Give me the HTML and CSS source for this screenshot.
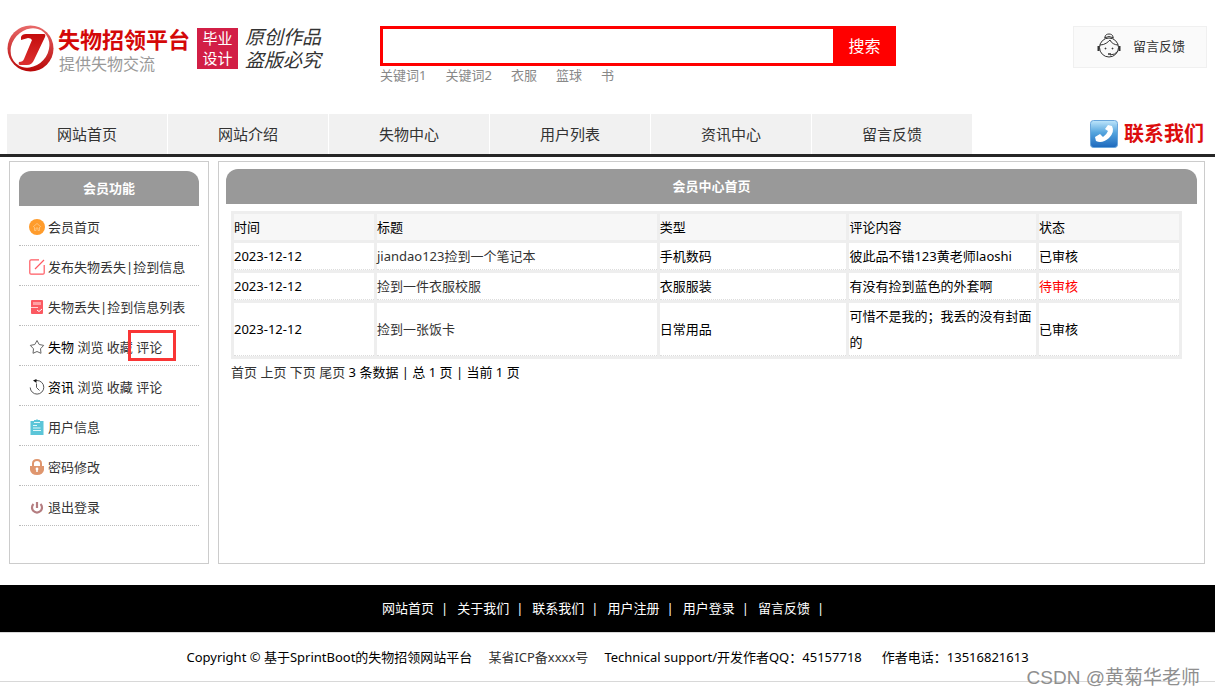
FILE: index.html
```html
<!DOCTYPE html>
<html lang="zh-CN">
<head>
<meta charset="utf-8">
<title>失物招领平台</title>
<link rel="stylesheet" href="styles.css">
</head>
<body>
<header class="header">
  <div class="brand">
    <svg class="brand-mark" viewBox="0 0 47 47" aria-hidden="true">
      <defs>
        <linearGradient id="ring" x1="0" y1="0" x2="0" y2="1"><stop offset="0" stop-color="#e86a6a"/><stop offset="1" stop-color="#b80606"/></linearGradient>
        <linearGradient id="stem" x1="0" y1="0" x2="0" y2="1"><stop offset="0" stop-color="#c40c0c"/><stop offset="1" stop-color="#dc3030"/></linearGradient>
      </defs>
      <circle cx="23.500" cy="23.500" r="23" fill="url(#ring)"/>
      <ellipse cx="23" cy="23" rx="21" ry="18" fill="#fff" transform="rotate(-48 23 23)"/>
      <path d="M14 12Q15 9 19 9H37Q39 9 38 12L27 35Q25 40 20 40H13Q11 40 12 37Q16 37 17 34L25 15Q24 13 21 13L14 15Z" fill="url(#stem)"/>
    </svg>
    <div class="brand-text">
      <h1 class="brand-name">失物招领平台</h1>
      <p class="brand-sub">提供失物交流</p>
    </div>
    <div class="badge">毕业<br>设计</div>
    <div class="slogan"><div>原创作品</div><div>盗版必究</div></div>
  </div>
  <div class="search">
    <form class="search-form">
      <input class="search-input" type="text" aria-label="搜索关键词">
      <button class="search-button" type="button">搜索</button>
    </form>
    <div class="keywords"><a href="#">关键词1</a><a href="#">关键词2</a><a href="#">衣服</a><a href="#">篮球</a><a href="#">书</a></div>
  </div>
  <a class="feedback" href="#">
    <svg class="feedback-icon" viewBox="0 0 24 26" fill="none" stroke="#333" aria-hidden="true">
      <path d="M8 4C8 0 16 0 16 4M7 5Q12 2 17 5"/>
      <circle cx="12" cy="14.500" r="9.500"/>
      <path d="M3 12C8 12 11 9 13 7C14 10 18 12 21 12"/>
      <path d="M1.500 13V18M22.500 13V18" stroke-width="2"/>
      <path d="M21 18Q18 22 13 22"/>
      <path d="M11 21H14" stroke-width="1.500"/>
      <circle cx="8.500" cy="15.500" r=".5" fill="#333"/><circle cx="15.500" cy="15.500" r=".5" fill="#333"/>
    </svg>
    留言反馈
  </a>
</header>

<div class="navbar">
  <nav class="nav"><a href="#">网站首页</a><a href="#">网站介绍</a><a href="#">失物中心</a><a href="#">用户列表</a><a href="#">资讯中心</a><a href="#">留言反馈</a></nav>
  <a class="contact" href="#">
    <svg class="contact-icon" viewBox="0 0 28 28" aria-hidden="true">
      <defs><linearGradient id="tile" x1="0" y1="0" x2="0" y2="1"><stop offset="0" stop-color="#bfe6fb"/><stop offset=".45" stop-color="#54a5de"/><stop offset="1" stop-color="#1c68bd"/></linearGradient></defs>
      <rect x=".5" y=".5" width="27" height="27" rx="3" fill="url(#tile)" stroke="#6aa7dc"/>
      <path d="M18 5L22 6Q25 12 19 18Q12 24 6 21L5 17L10 14L13 17Q17 14 18 11L15 9Z" fill="#fff"/>
    </svg>
    联系我们
  </a>
</div>

<main class="content">
  <aside class="panel side">
    <h2 class="panel-title">会员功能</h2>
    <ul class="menu">
      <li><svg viewBox="0 0 16 16"><circle cx="8" cy="8" r="8" fill="#ff9c2c"/><path d="M4 8L8 4.500L12 8M5.500 8V11.500H7V9H9V11.500H10.500V8" fill="none" stroke="#ffc988" stroke-width=".8"/></svg><a href="#">会员首页</a></li>
      <li><svg viewBox="0 0 16 16" fill="none" stroke="#ff5a62" stroke-width="1.200"><path d="M10 .8H2Q.8.800.8 2V14Q.8 15.200 2 15.200H14Q15.200 15.200 15.200 14V6M6 10L15 1"/></svg><a href="#">发布失物丢失|捡到信息</a></li>
      <li><svg viewBox="0 0 16 16"><rect x="2" y="1" width="12" height="14" rx="1" fill="#fb5961"/><path d="M4 3H12V6H4Z" fill="#ffa0a3"/><path d="M2 8.500H9" stroke="#ffd2d3"/><path d="M8 11L10 12.500L13 10" fill="none" stroke="#fff"/></svg><a href="#">失物丢失|捡到信息列表</a></li>
      <li><svg viewBox="0 0 16 16" fill="none" stroke="#666"><path d="M8 1.500L10.200 5.500L14.700 6.400L11.500 9.800L12 14.300L8 12.500L4 14.300L4.500 9.800L1.300 6.400L5.800 5.500Z" stroke-linejoin="round"/></svg><span>失物 <a href="#">浏览</a> <a href="#">收藏</a> <a class="marked" href="#">评论</a></span></li>
      <li><svg viewBox="0 0 16 16" fill="none" stroke="#555"><path d="M6 1.500H8A6.800 6.800 0 1 1 1.200 8.500M7.500 4.500V8.500L10.500 11.500"/><path d="M4 1.500L7.500 0V4Z" fill="#111" stroke="none"/></svg><span>资讯 <a href="#">浏览</a> <a href="#">收藏</a> <a href="#">评论</a></span></li>
      <li><svg viewBox="0 0 16 16"><path d="M1.500 2H5V1H7Q8-.500 9 1H11V2H14.500V16H1.500Z" fill="#5bc5d8"/><path d="M5 3.500H11M4 6.500H8M4 9H11.500M4 11.500H12" stroke="#e0f7fa"/></svg><a href="#">用户信息</a></li>
      <li><svg viewBox="0 0 16 16"><path d="M4 8V4.500Q4 1 8 1Q12 1 12 4.500V8" fill="none" stroke="#df966e" stroke-width="2"/><path d="M1 7H15V11Q14 16 8 16Q2 16 1 11Z" fill="#df966e"/><circle cx="8" cy="10" r="1.400" fill="#fff"/><path d="M8 10V13" stroke="#fff" stroke-width="1.500"/></svg><a href="#">密码修改</a></li>
      <li><svg viewBox="0 0 16 16" fill="none" stroke="#b47d80" stroke-width="2.200"><path d="M4.500 5A5 5 0 1 0 11.500 5M8 3V9"/></svg><a href="#">退出登录</a></li>
    </ul>
  </aside>
  <section class="panel main">
    <h2 class="panel-title">会员中心首页</h2>
    <div class="records">
      <table class="table">
        <colgroup><col class="c15"><col class="c30"><col class="c20"><col class="c20"><col class="c15"></colgroup>
        <thead><tr><th>时间</th><th>标题</th><th>类型</th><th>评论内容</th><th>状态</th></tr></thead>
        <tbody>
          <tr><td>2023-12-12</td><td><a href="#">jiandao123捡到一个笔记本</a></td><td>手机数码</td><td>彼此品不错123黄老师laoshi</td><td>已审核</td></tr>
          <tr><td>2023-12-12</td><td><a href="#">捡到一件衣服校服</a></td><td>衣服服装</td><td>有没有捡到蓝色的外套啊</td><td class="pending">待审核</td></tr>
          <tr><td>2023-12-12</td><td><a href="#">捡到一张饭卡</a></td><td>日常用品</td><td>可惜不是我的；我丢的没有封面的</td><td>已审核</td></tr>
        </tbody>
      </table>
      <div class="pager"><a href="#">首页</a> <a href="#">上页</a> <a href="#">下页</a> <a href="#">尾页</a> 3 条数据 | 总 1 页 | 当前 1 页</div>
    </div>
  </section>
</main>

<footer class="footer">
  <nav class="footer-nav"><a href="#">网站首页</a><a href="#">关于我们</a><a href="#">联系我们</a><a href="#">用户注册</a><a href="#">用户登录</a><a href="#">留言反馈</a></nav>
  <div class="copyright">
    <span>Copyright © 基于SprintBoot的失物招领网站平台</span>
    <a href="#">某省ICP备xxxx号</a>
    <span>Technical support/开发作者QQ：45157718</span>
    <span class="phone">作者电话：13516821613</span>
  </div>
  <div class="watermark">CSDN @黄菊华老师</div>
</footer>
</body>
</html>
```

FILE: styles.css
```css
*, *::after { box-sizing: border-box; }
body {
  margin: 0;
  background: #fff;
  color: #000;
  font: 13px/26px "Noto Sans", "Noto Sans CJK SC", sans-serif;
}
h1, h2, p, ul { margin: 0; padding: 0; }
a { color: #333; text-decoration: none; }

.header {
  display: grid;
  grid-template-columns: 373px 516px 1fr;
  align-items: start;
  padding: 25px 8px 0 7px;
  min-height: 114px;
}
.brand { display: flex; align-items: flex-start; }
.brand-mark { width: 47px; height: 47px; flex: none; }
.brand-text { margin-left: 4px; }
.brand-name { color: #d40808; font-size: 22px; line-height: 28px; font-weight: 700; }
.brand-sub { padding-left: 1px; color: #999; font-size: 16px; line-height: 22px; }
.badge {
  width: 41px;
  height: 41px;
  margin: 3px 0 0 7px;
  background: #d21f46;
  color: #fff;
  font-size: 15px;
  line-height: 20px;
  text-align: center;
}
.slogan {
  display: grid;
  gap: 4px;
  margin: 3px 0 0 7px;
  color: #333;
  font-size: 19px;
  font-style: italic;
  line-height: 19px;
}

.search { padding-top: 1px; }
.search-form { display: flex; height: 40px; }
.search-input {
  flex: 1;
  min-width: 0;
  padding: 0 8px;
  border: 3px solid #f00;
  border-right: 0;
  outline: 0;
  font: inherit;
}
.search-button {
  width: 63px;
  padding: 0;
  border: 0;
  background: #f00;
  color: #fff;
  font: inherit;
  font-size: 16px;
}
.keywords { display: flex; gap: 19px; line-height: 18px; }
.keywords a { color: #888; }

.feedback {
  justify-self: end;
  display: flex;
  align-items: center;
  gap: 12px;
  width: 134px;
  height: 42px;
  margin-top: 1px;
  padding: 0 0 2px 23px;
  border: 1px solid #f0f0f0;
  background: #fafafa;
}
.feedback-icon { width: 24px; height: 26px; }

.navbar {
  display: flex;
  justify-content: space-between;
  padding: 0 11px 0 7px;
  border-bottom: 3px solid #262626;
}
.nav { display: flex; gap: 1px; }
.nav a {
  width: 160px;
  background: #f1f1f1;
  font-size: 15px;
  line-height: 40px;
  text-align: center;
}
.contact {
  display: flex;
  align-items: center;
  gap: 6px;
  color: #dc0d0d;
  font-size: 20px;
  font-weight: 700;
}
.contact-icon { width: 28px; height: 28px; }

.content {
  display: flex;
  gap: 9px;
  min-height: 403px;
  margin: 4px 10px 21px 9px;
}
.panel { border: 1px solid #ccc; }
.panel-title {
  border-radius: 12px 12px 0 0;
  background: #999;
  color: #fff;
  font-size: 13px;
  line-height: 35px;
  text-align: center;
}
.side { flex: 0 0 200px; padding: 9px; }
.main { flex: 1; min-width: 0; padding: 7px; }

.menu { list-style: none; }
.menu li {
  display: flex;
  align-items: center;
  gap: 3px;
  height: 40px;
  padding: 2px 0 0 10px;
  border-bottom: 1px dotted #bbb;
  white-space: nowrap;
}
.menu svg { width: 16px; height: 16px; flex: none; }
.marked { position: relative; }
.marked::after {
  content: "";
  position: absolute;
  top: -8px;
  left: -8px;
  width: 48px;
  height: 31px;
  border: 3px solid #f93535;
}

.records { padding: 7px 15px 0 5px; }
.table {
  width: 100%;
  table-layout: fixed;
  border-collapse: separate;
  border-spacing: 3px;
  background: #eee;
}
.c15 { width: 15%; }
.c20 { width: 20%; }
.c30 { width: 30%; }
.table th, .table td { padding: 0; text-align: left; font-weight: 400; }
.table th { background: #f7f7f7; }
.table td { background: #fff; border-bottom: 1px dotted #ddd; }
.table .pending { color: #f00; }

.footer { position: relative; padding-bottom: 15px; }
.footer-nav {
  display: flex;
  justify-content: center;
  background: #000;
  color: #fff;
  line-height: 47px;
}
.footer-nav a { color: #fff; }
.footer-nav a::after { content: "|"; margin: 0 9px 0 7px; }
.copyright {
  display: flex;
  justify-content: center;
  gap: 16px;
  border: solid #d8d8d8;
  border-width: 1px 0;
  line-height: 48px;
}
.phone { margin-left: 4px; }
.watermark {
  position: absolute;
  right: 15px;
  bottom: 6px;
  color: #8f8f8f;
  font: 19px/26px "Liberation Sans", "Noto Sans CJK SC", sans-serif;
}
```
